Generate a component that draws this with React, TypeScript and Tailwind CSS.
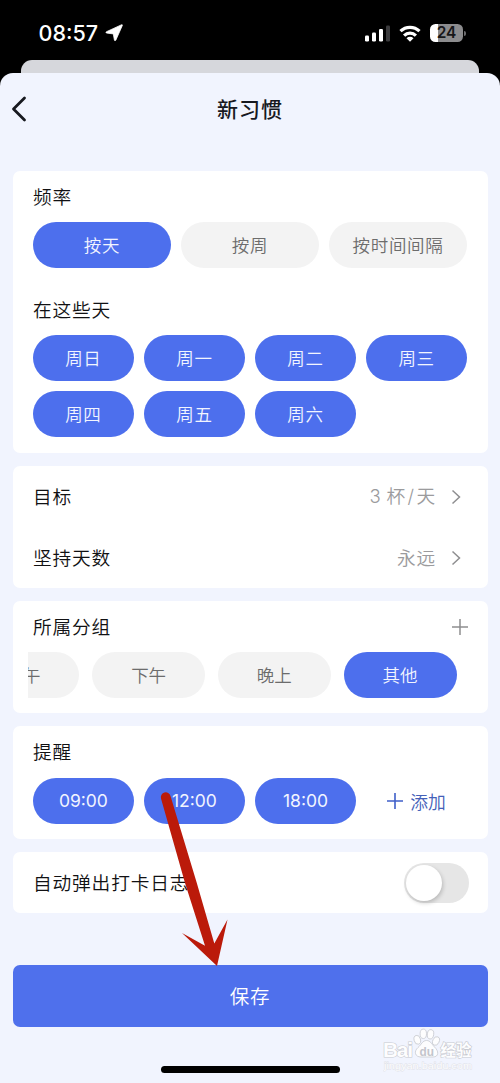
import { useState } from "react";
import type { ReactNode } from "react";

function Pill({ active, onClick, className = "", children }: { active?: boolean; onClick?: () => void; className?: string; children: ReactNode }) {
  return (
    <button
      onClick={onClick}
      className={`flex h-[46px] items-center justify-center whitespace-nowrap rounded-full text-[17.5px] ${
        active ? "bg-[#4d6fed] text-[#f2f5ff]" : "bg-[#f3f3f3] text-[#6c6c6c]"
      } ${className}`}
    >
      {children}
    </button>
  );
}

function Card({ className = "", children }: { className?: string; children: ReactNode }) {
  return <section className={`rounded-[7px] bg-white px-[20.5px] ${className}`}>{children}</section>;
}

function Title({ children }: { children: ReactNode }) {
  return <h2 className="pb-[2px] text-[18.7px] font-[350] leading-[26px] tracking-[0.85px] text-[#111113]">{children}</h2>;
}

function Chevron() {
  return (
    <svg className="h-[16px] w-[10px]" viewBox="0 0 10 16" fill="none" stroke="#8e8e90" strokeWidth="1.5">
      <path d="M1.5 1.5 8.5 8 1.5 14.5" />
    </svg>
  );
}

function SettingRow({ label, value }: { label: string; value: ReactNode }) {
  return (
    <div className="flex h-[61px] items-center">
      <Title>{label}</Title>
      <span className="ml-auto mr-[15px] pb-px text-[18.7px] font-[350] tracking-[0.85px] text-[#9b9b9d]">{value}</span>
      <span className="mr-[6px] flex">
        <Chevron />
      </span>
    </div>
  );
}

function StatusBar() {
  return (
    <div className="flex h-[60px] items-center bg-black pl-[38.5px] pr-[34px] pt-[6px] text-white">
      <span className="w-[66px] font-['Inter','Liberation_Sans',sans-serif] text-[21.5px] font-medium leading-[28px]">08:57</span>
      <svg className="h-[18px] w-[18px]" viewBox="0 0 18 18" fill="white" stroke="white" strokeWidth="0.8" strokeLinejoin="round">
        <path d="M16.700.700C17.300.500 17.500.900 17.300 1.500L10.800 16.200c-.4.7-1.400.6-1.400-.2L8.300 9.900 1.800 9.100C.8 9 .700 8.100 1.500 7.700Z" />
      </svg>
      <svg className="ml-auto h-[17px] w-[25px]" viewBox="0 0 25 17" fill="white">
        <rect x="0" y="10.5" width="4" height="6" rx="1.2" />
        <rect x="7" y="7.5" width="4" height="9" rx="1.2" />
        <rect x="14" y="4" width="4" height="12.5" rx="1.2" />
        <rect x="21" y="0.5" width="4" height="16" rx="1.2" fill="#3b3b3d" />
      </svg>
      <svg className="ml-[9px] h-[17px] w-[22px]" viewBox="0 0 22 17" fill="none" stroke="white" strokeWidth="3.2">
        <path d="M1.500 6.200a13.700 13.700 0 0 1 19 0" />
        <path d="M5.100 10.600a8.400 8.400 0 0 1 11.800 0" />
        <path d="m7.500 13.200 3.500 3.600 3.500-3.600a5 5 0 0 0-7 0Z" fill="white" stroke="none" />
      </svg>
      <div className="ml-[9px] flex items-center">
        <div className="flex h-[18px] w-[33px] items-center justify-center rounded-[5.5px] bg-[linear-gradient(to_right,#fff_24%,#8c8c8e_24%)]">
          <span className="font-['Inter','Liberation_Sans',sans-serif] text-[15.5px] font-semibold leading-[18px] text-[#171719]">24</span>
        </div>
        <span className="ml-[1px] h-[5px] w-[2px] rounded-r-full bg-[#6c6c6e]" />
      </div>
    </div>
  );
}

function Watermark() {
  return (
    <div className="absolute left-[383px] top-[1028px] h-[48px] w-[96px]">
      <svg className="h-[48px] w-[96px]" viewBox="0 0 96 48">
        <g fill="#fdfdfe" stroke="#c8cad0" strokeWidth="0.8">
          <ellipse cx="34.300" cy="11.800" rx="3.200" ry="4.500" transform="rotate(-15 34.3 11.8)" />
          <ellipse cx="40.300" cy="5.800" rx="3.200" ry="4.700" />
          <ellipse cx="47.500" cy="6.300" rx="3.200" ry="4.700" transform="rotate(8 47.5 6.3)" />
          <ellipse cx="53" cy="13" rx="3.200" ry="4.500" transform="rotate(25 53 13)" />
          <path d="M43.500 12.500c4 0 5 3.500 8 6.500 4.500 4 4.500 10-1.500 10H38c-6 0-7.500-5.500-3-9.500 3.500-3 4.500-7 8.500-7Z" />
        </g>
        <g fontFamily="Liberation Sans, sans-serif" stroke="#c8cad0" fill="#fdfdfe" paintOrder="stroke">
          <text x="0" y="29" fontSize="21" fontWeight="bold" strokeWidth="1.2" textLength="30">Bai</text>
          <text x="36.500" y="27.500" fontSize="13" fontWeight="bold" strokeWidth="0" fill="#c3c5cc" textLength="14.500" lengthAdjust="spacingAndGlyphs">du</text>
          <text x="57.500" y="27.500" fontSize="15.500" fontFamily="Noto Sans CJK SC, sans-serif" fontWeight="bold" strokeWidth="1.2">经验</text>
          <text x="1" y="41" fontSize="9.500" strokeWidth="0.8" stroke="#e0e1e7" textLength="88" lengthAdjust="spacingAndGlyphs">jingyan.baidu.com</text>
        </g>
      </svg>
    </div>
  );
}

const weekdays = ["周日", "周一", "周二", "周三", "周四", "周五", "周六"];
const frequencies = ["按天", "按周", "按时间间隔"];

export default function App() {
  const [frequency, setFrequency] = useState("按天");
  const [days, setDays] = useState(weekdays);
  const [group, setGroup] = useState("其他");
  const [autoLog, setAutoLog] = useState(false);

  const toggleDay = (day: string) => setDays(days.includes(day) ? days.filter((d) => d !== day) : [...days, day]);

  return (
    <div className="relative h-[1083px] w-[500px] overflow-hidden bg-black font-['Noto_Sans_CJK_SC',sans-serif]">
      <StatusBar />
      <div className="mx-[21px] h-[13px] rounded-t-[11px] bg-[#d6d7dc]" />
      <main className="flex h-[1010px] flex-col rounded-t-[13px] bg-[#f1f4fe] px-[12.5px]">
        <header className="grid h-[72px] grid-cols-3 items-center">
          <svg className="-ml-[2px] h-[26px] w-[16px]" viewBox="0 0 16 26" fill="none" stroke="#17191f" strokeWidth="2.8" strokeLinecap="round" strokeLinejoin="round">
            <path d="M13.500 2 2.500 13 13.500 24" />
          </svg>
          <h1 className="text-center text-[21px] font-medium tracking-[1px] text-[#17191f]">新习惯</h1>
        </header>

        <div className="mt-[26px] flex flex-col gap-[13px]">
          <Card className="h-[282px] pt-[12px]">
            <Title>频率</Title>
            <div className="mt-[11px] grid grid-cols-3 gap-[10px]">
              {frequencies.map((f) => (
                <Pill key={f} active={frequency === f} onClick={() => setFrequency(f)} className="font-[350] tracking-[0.7px]">
                  {f}
                </Pill>
              ))}
            </div>
            <div className="mt-[28px]">
              <Title>在这些天</Title>
            </div>
            <div className="mt-[11px] grid grid-cols-4 gap-[10.300px]">
              {weekdays.map((d) => (
                <Pill key={d} active={days.includes(d)} onClick={() => toggleDay(d)} className="font-[350] tracking-[0.7px]">
                  {d}
                </Pill>
              ))}
            </div>
          </Card>

          <Card className="h-[122px]">
            <SettingRow
              label="目标"
              value={
                <>
                  <span className="font-['Inter','Liberation_Sans',sans-serif] text-[18.500px]">3</span> 杯
                  <span className="px-[1.500px] font-['Inter','Liberation_Sans',sans-serif]">/</span>天
                </>
              }
            />
            <SettingRow label="坚持天数" value="永远" />
          </Card>

          <Card className="h-[112px] pt-[12px]">
            <div className="flex items-center justify-between">
              <Title>所属分组</Title>
              <svg className="mr-[-1px] h-[16px] w-[16px]" viewBox="0 0 16 16" stroke="#8e8e90" strokeWidth="1.5">
                <path d="M8 0v16M0 8h16" />
              </svg>
            </div>
            <div className="-ml-[5px] mt-[11px] flex justify-end gap-[12.700px] overflow-hidden pr-[10.500px]">
              {["上午", "下午", "晚上", "其他"].map((g) => (
                <Pill key={g} active={group === g} onClick={() => setGroup(g)} className="w-[113px] shrink-0 font-[350]">
                  {g}
                </Pill>
              ))}
            </div>
          </Card>

          <Card className="h-[113px] pt-[12px]">
            <Title>提醒</Title>
            <div className="mt-[12px] grid grid-cols-4 gap-[10.300px]">
              {["09:00", "12:00", "18:00"].map((t) => (
                <Pill key={t} active className="font-['Inter','Liberation_Sans',sans-serif] font-normal">
                  {t}
                </Pill>
              ))}
              <button className="flex items-center justify-center gap-[7px] text-[17.800px] font-[350] text-[#4460b8]">
                <svg className="h-[16px] w-[16px]" viewBox="0 0 16 16" stroke="#3f5fc9" strokeWidth="1.6">
                  <path d="M8 0v16M0 8h16" />
                </svg>
                添加
              </button>
            </div>
          </Card>

          <Card className="flex h-[61px] items-center justify-between">
            <Title>自动弹出打卡日志</Title>
            <button
              role="switch"
              aria-checked={autoLog}
              onClick={() => setAutoLog(!autoLog)}
              className={`-mr-[2px] flex h-[40px] w-[65px] items-center rounded-full p-[2px] ${autoLog ? "justify-end bg-[#4d6fed]" : "bg-[#e6e6e6]"}`}
            >
              <span className="h-[36px] w-[36px] rounded-full bg-white shadow-[1px_2px_4px_rgba(0,0,0,0.2)]" />
            </button>
          </Card>
        </div>

        <button className="mt-[52px] flex h-[62px] shrink-0 items-center justify-center rounded-[7px] bg-[#4f70ec] text-[19.500px] font-[350] tracking-[0.8px] text-white">
          保存
        </button>
        <div className="mx-auto mt-[39px] h-[7px] w-[179px] shrink-0 rounded-full bg-black" />
      </main>

      <Watermark />

      <svg className="pointer-events-none absolute left-[155px] top-[785px] h-[190px] w-[80px]" viewBox="155 785 80 190" fill="#bb1a0a">
        <path d="M161 798.500a4.900 4.900 0 0 1 9.500-2.500L196.800 883 214.300 943.500l13.200-24L217 966 182 933l23 12.700L185 883Z" />
      </svg>
    </div>
  );
}
